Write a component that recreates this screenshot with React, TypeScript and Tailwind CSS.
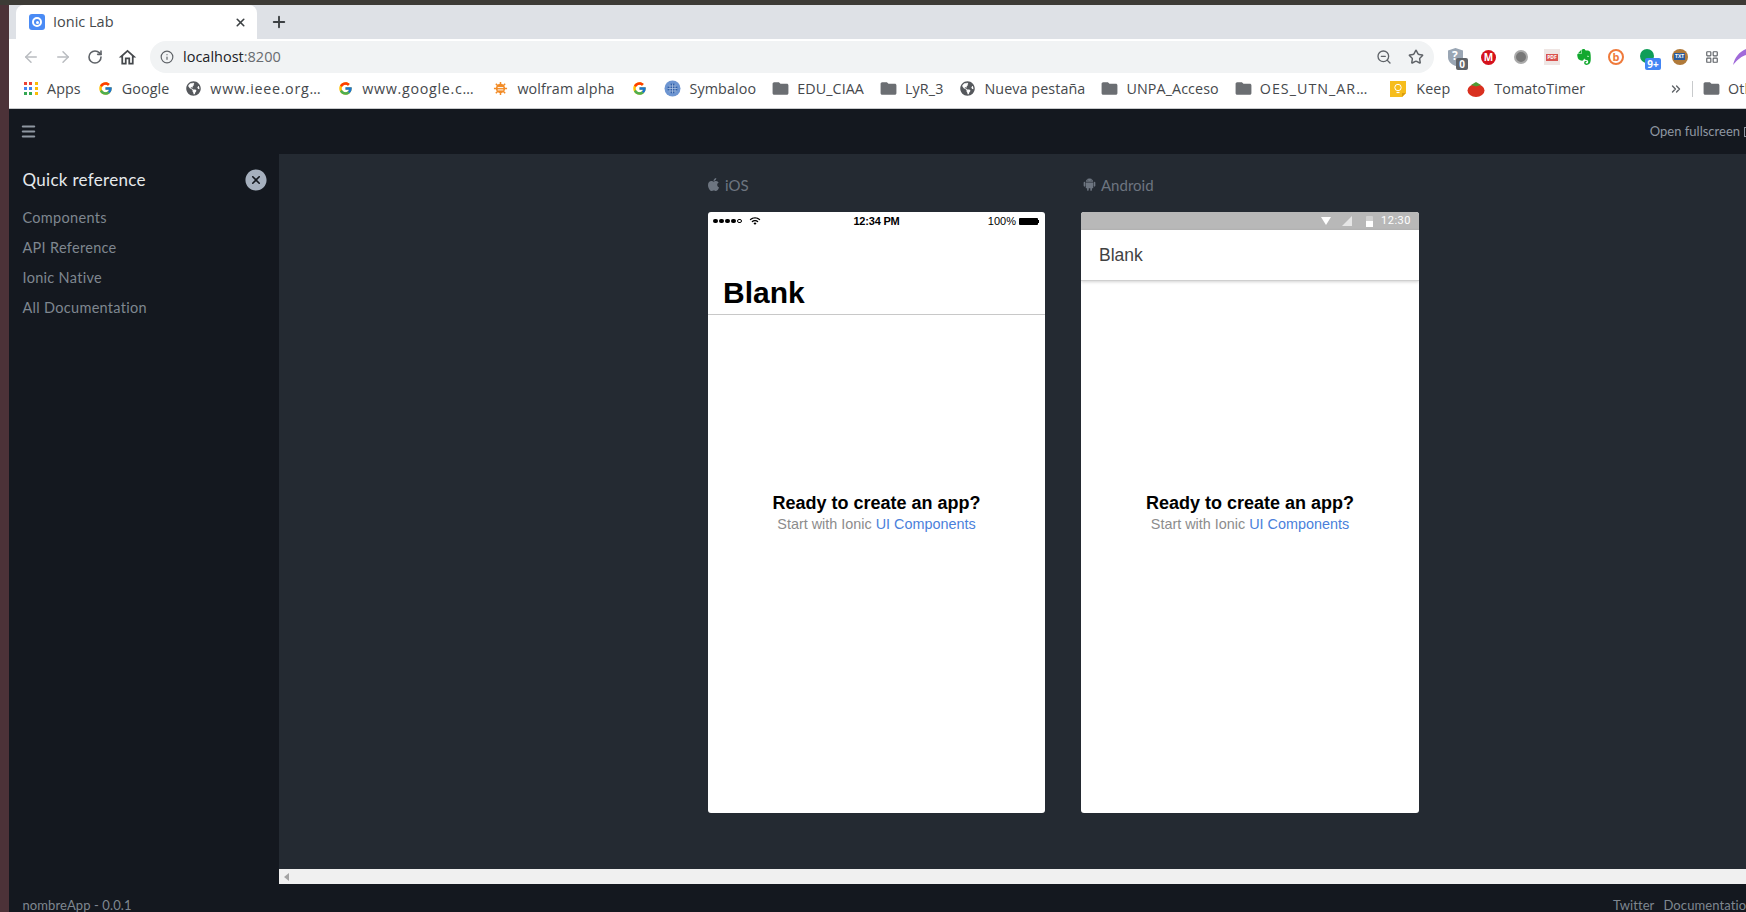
import type { ReactNode } from "react";
import { FcGoogle } from "react-icons/fc";
import { FaApple, FaGlobeAmericas } from "react-icons/fa";
import { IoIosCloseCircle, IoIosWifi, IoLogoAndroid } from "react-icons/io";
import { MdFolder, MdOutlineHome } from "react-icons/md";
import { SiEvernote } from "react-icons/si";
import { ArrowLeft, ArrowRight, ChevronsRight, Info, LayoutGrid, Menu, Plus, RotateCw, Star, X, ZoomOut } from "lucide-react";

const Folder = () => <MdFolder size={19} className="text-[#6b6e72] -mx-[2px] shrink-0" />;
const Globe = () => <FaGlobeAmericas size={15} className="text-[#55585c]" />;
const G = () => <FcGoogle size={15} />;

const AppsIcon = () => (
  <div className="grid grid-cols-3 gap-[2px] w-[14px]">
    {["bg-[#ea4335]", "bg-[#ea4335]", "bg-[#fbbc05]", "bg-[#4285f4]", "bg-[#4285f4]", "bg-[#fbbc05]", "bg-[#34a853]", "bg-[#34a853]", "bg-[#fbbc05]"].map((c, i) => (
      <span key={i} className={`h-[3px] w-[3px] ${c}`} />
    ))}
  </div>
);

const Wolfram = () => (
  <svg width="15" height="15" viewBox="0 0 16 16">
    <circle cx="8" cy="8" r="5" fill="#f28c28" />
    <path d="M8 1v14M1 8h14M3 3l10 10M13 3L3 13" stroke="#f28c28" strokeWidth="1.6" />
    <path d="M5 7h6M5 9.500h6" stroke="#fff" strokeWidth="1" />
  </svg>
);

const Symbaloo = () => (
  <svg width="17" height="17" viewBox="0 0 17 17">
    <circle cx="8.500" cy="8.500" r="8" fill="#6d95d1" />
    <circle cx="8.500" cy="8.500" r="5" fill="#2f5fa8" />
    <path d="M6 4v9M8.500 3.500v10M11 4v9M4 6h9M3.500 8.500h10M4 11h9" stroke="#b9cdea" strokeWidth="0.7" />
  </svg>
);

const KeepIcon = () => (
  <svg width="18" height="18" viewBox="0 0 18 18">
    <path d="M1 1h16v12l-4 4H1z" fill="#f6bd1c" />
    <path d="M13 17v-4h4z" fill="#d99c10" />
    <circle cx="9" cy="7.500" r="3.200" fill="none" stroke="#fff" strokeWidth="1" />
    <path d="M7.500 12.500h3" stroke="#fff" strokeWidth="1.200" />
  </svg>
);

const Tomato = () => (
  <svg width="18" height="16" viewBox="0 0 18 16">
    <ellipse cx="9" cy="9.500" rx="8.500" ry="6.500" fill="#d9301f" />
    <path d="M4 4l5-3 5 3-5 1.600z" fill="#4f9a34" />
  </svg>
);

const bookmarks: { label: string; icon: ReactNode; text?: string; box?: string }[] = [
  { label: "Apps", icon: <AppsIcon /> },
  { label: "Google", icon: <G /> },
  { label: "www.ieee.org…", icon: <Globe />, text: "tracking-[0.7px]" },
  { label: "www.google.c…", icon: <G />, text: "tracking-[0.7px]" },
  { label: "wolfram alpha", icon: <Wolfram />, box: "ml-[2px]" },
  { label: "", icon: <G /> },
  { label: "Symbaloo", icon: <Symbaloo /> },
  { label: "EDU_CIAA", icon: <Folder /> },
  { label: "LyR_3", icon: <Folder /> },
  { label: "Nueva pestaña", icon: <Globe /> },
  { label: "UNPA_Acceso", icon: <Folder /> },
  { label: "OES_UTN_AR…", icon: <Folder />, text: "tracking-[1px]" },
  { label: "Keep", icon: <KeepIcon />, box: "ml-[4px]" },
  { label: "TomatoTimer", icon: <Tomato /> },
];

function Extensions() {
  return (
    <div className="flex items-center gap-[15px] pl-[14px] shrink-0">
      {/* shield with counter */}
      <div className="relative w-[17px] h-[18px]">
        <svg width="15" height="18" viewBox="0 0 15 18">
          <path d="M7.500 0L15 2.500V9c0 4-3 7.500-7.500 9C3 16.500 0 13 0 9V2.500z" fill="#9aa6b4" />
        </svg>
        <span className="absolute left-[4px] top-0 text-[12px] leading-[15px] font-bold text-white">?</span>
        <span className="absolute -right-[3px] top-[10px] w-[12px] h-[12px] rounded-[2px] bg-[#5f6368] text-white text-[10px] leading-[12px] font-bold text-center">0</span>
      </div>
      <div className="ml-[1px] w-[15px] h-[15px] rounded-full bg-[#d5121c] text-white text-[10px] leading-[15px] font-bold text-center">M</div>
      <div className="ml-[3px] w-[14px] h-[14px] rounded-full bg-[#777] border-[2px] border-[#aaa]" />
      <div className="ml-[1px] w-[16px] h-[16px] bg-[#efe6e4] flex items-center justify-center">
        <span className="bg-[#d9534f] text-white text-[5px] leading-[7px] font-bold px-[1px]">PDF</span>
      </div>
      <SiEvernote size={16} className="ml-[1px] text-[#12a82f]" />
      <div className="ml-[1px] w-[16px] h-[16px] rounded-full border-[2px] border-[#ef7a3b] text-[#ef7a3b] text-[11px] leading-[12px] font-bold text-center">b</div>
      <div className="relative w-[16px] h-[16px] ml-[1px]">
        <div className="w-[14px] h-[14px] rounded-full bg-[#0f9d58]" />
        <span className="absolute left-[5px] top-[9px] w-[16px] h-[12px] rounded-[2px] bg-[#4285f4] text-white text-[10px] leading-[12px] font-bold text-center">9+</span>
      </div>
      <div className="relative ml-[1px] w-[16px] h-[16px] rounded-full bg-[#b07a3a]">
        <span className="absolute left-[2px] top-[4px] bg-[#2a5b9c] text-white text-[5px] leading-[7px] font-bold px-[1px]">TXT</span>
      </div>
      <LayoutGrid size={14} className="text-[#5f6368] ml-[2px]" />
      <svg width="14" height="18" viewBox="0 0 14 18" className="shrink-0 -ml-[2px]">
        <path d="M1 17C3 9 7 4 14 1v6c-4 1-8 4-13 10z" fill="#a06ad9" />
      </svg>
    </div>
  );
}

function Phone({ width, children }: { width: string; children: ReactNode }) {
  return <div className={`${width} relative h-[601px] bg-white rounded-[3px] overflow-hidden flex flex-col font-['Liberation_Sans',sans-serif]`}>{children}</div>;
}

// sits centred on the whole phone screen, over the header
function Starter() {
  return (
    <div className="absolute inset-0 pt-[2px] flex flex-col items-center justify-center">
      <div className="text-[18px] leading-[21px] font-bold text-black">Ready to create an app?</div>
      <div className="mt-[1px] text-[14.4px] leading-[19px] text-[#8c8c8c]">
        Start with Ionic <span className="text-[#4a7fdb]">UI Components</span>
      </div>
    </div>
  );
}

export default function App() {
  return (
    <div className="h-screen w-full overflow-hidden flex flex-col bg-[#45332f] font-['Open_Sans',sans-serif]">
      <div className="h-[5px] bg-[#3d3b36] shrink-0" />
      <div className="flex-1 min-h-0 flex">
        <div className="w-[9px] shrink-0 bg-[#4c3238]" />
        <div className="flex-1 min-w-0 flex flex-col">
          {/* tabs */}
          <div className="h-[34px] bg-[#dee1e6] flex items-end pl-[7px] shrink-0">
            <div className="w-[241px] h-[34px] bg-white rounded-t-[8px] flex items-center pl-[13px] pr-[10px]">
              <div className="w-[16px] h-[16px] rounded-[3px] bg-[#4a8bf5] flex items-center justify-center">
                <div className="w-[10px] h-[10px] rounded-full border-[2px] border-white bg-[#4a8bf5] flex items-center justify-center">
                  <div className="w-[3px] h-[3px] rounded-full bg-white" />
                </div>
              </div>
              <span className="ml-[8px] text-[14.5px] text-[#45484c]">Ionic Lab</span>
              <X size={13} strokeWidth={3} className="ml-auto text-[#3c4043]" />
            </div>
            <Plus size={18} strokeWidth={2.5} className="ml-[13px] mb-[8px] text-[#3c4043]" />
          </div>
          {/* toolbar */}
          <div className="h-[36px] bg-white flex items-center pl-[13px] shrink-0">
            <ArrowLeft size={18} className="text-[#b9bcc0]" />
            <ArrowRight size={18} className="ml-[14px] text-[#b9bcc0]" />
            <RotateCw size={16} strokeWidth={2.4} className="ml-[15px] text-[#5f6368]" />
            <MdOutlineHome size={21} className="ml-[14px] text-[#45484c]" />
            <div className="ml-[12px] flex-1 min-w-0 h-[32px] bg-[#f1f3f4] rounded-full flex items-center pl-[10px] pr-[10px]">
              <Info size={14} className="text-[#5f6368]" />
              <span className="ml-[9px] text-[14.5px] text-[#202124]">localhost<span className="text-[#696c70]">:8200</span></span>
              <ZoomOut size={16} className="ml-auto text-[#5f6368]" />
              <Star size={16} strokeWidth={2.2} className="ml-[16px] text-[#5f6368]" />
            </div>
            <Extensions />
          </div>
          {/* bookmarks */}
          <div className="h-[34px] pb-[6px] bg-white border-b border-[#c8cacc] flex items-center pl-[15px] shrink-0 text-[14.3px] tracking-[0.1px] text-[#45484c] whitespace-nowrap">
            <div className="flex-1 min-w-0 flex items-center gap-[17px] overflow-hidden">
              {bookmarks.map((b, i) => (
                <div key={i} className={`flex items-center gap-[9px] shrink-0 ${b.box ?? ""}`}>
                  {b.icon}
                  {b.label && <span className={b.text ?? ""}>{b.label}</span>}
                </div>
              ))}
            </div>
            <ChevronsRight size={14} strokeWidth={2.4} className="text-[#5f6368] shrink-0" />
            <div className="ml-[9px] w-px h-[16px] bg-[#c8cacc] shrink-0" />
            <div className="ml-[11px] flex items-center gap-[9px] w-[42px] shrink-0">
              <Folder />
              <span>Other bookmarks</span>
            </div>
          </div>
          {/* ionic lab */}
          <div className="flex-1 min-h-0 bg-[#14181f] flex flex-col font-['Lato',sans-serif]">
            <div className="h-[45px] shrink-0 flex items-center pl-[11px] whitespace-nowrap">
              <Menu size={17} strokeWidth={3} className="text-[#8f97a2]" />
              <span className="ml-auto text-[13px] text-[#8f97a2]">Open fullscreen</span>
              <span className="ml-[4px] w-[2px] h-[10px] border-l border-y border-[#8f97a2]" />
            </div>
            <div className="flex-1 min-h-0 flex">
              <aside className="w-[270px] shrink-0 pl-[13.5px] pr-[10px] pt-[13px]">
                <div className="flex items-center justify-between">
                  <span className="text-[17px] tracking-[0.3px] leading-[24px] text-[#e6e9ec]">Quick reference</span>
                  <IoIosCloseCircle size={26} className="text-[#a6b0be]" />
                </div>
                <nav className="mt-[10px] flex flex-col text-[14.5px] tracking-[0.3px] leading-[30px] text-[#7f8790]">
                  <span>Components</span>
                  <span>API Reference</span>
                  <span>Ionic Native</span>
                  <span>All Documentation</span>
                </nav>
              </aside>
              <main className="flex-1 min-w-0 flex flex-col bg-[#242a32]">
                <div className="flex-1 min-h-0 flex pl-[429px] gap-[36px] pt-[18px]">
                  <div className="flex flex-col">
                    <div className="h-[40px] pt-[3px] flex items-start gap-[4px] text-[15px] leading-[20px] text-[#6d7580]">
                      <FaApple size={15} className="mt-[2px] -ml-[2px]" />
                      iOS
                    </div>
                    <Phone width="w-[337px]">
                      <div className="h-[18px] flex items-center justify-between pl-[5px] pr-[6px] text-[11px] text-black relative">
                        <div className="flex items-center gap-[1.5px]">
                          {[0, 1, 2, 3].map((d) => <span key={d} className="w-[4.5px] h-[4.5px] rounded-full bg-black" />)}
                          <span className="w-[4.5px] h-[4.5px] rounded-full border-[0.5px] border-black" />
                          <IoIosWifi size={12} className="ml-[6px]" />
                        </div>
                        <span className="absolute left-1/2 -translate-x-1/2 text-[11px] font-bold tracking-[-0.2px]">12:34 PM</span>
                        <div className="flex items-center gap-[3px]">
                          100%
                          <div className="flex items-center">
                            <div className="w-[19px] h-[7px] bg-black rounded-[1px]" />
                            <div className="w-[1px] h-[3px] bg-black" />
                          </div>
                        </div>
                      </div>
                      <div className="h-[85px] border-b border-[#c8c8c8] flex items-end pl-[15px] pb-[2px]">
                        <span className="text-[30px] leading-[38px] font-bold text-black">Blank</span>
                      </div>
                      <Starter />
                    </Phone>
                  </div>
                  <div className="flex flex-col">
                    <div className="h-[40px] pt-[3px] flex items-start gap-[3px] text-[15px] leading-[20px] text-[#6d7580]">
                      <IoLogoAndroid size={17} className="mt-[1px]" />
                      Android
                    </div>
                    <Phone width="w-[338px]">
                      <div className="h-[18px] bg-[#b8b8b8] flex items-center justify-end pr-[8px] text-[11px] tracking-[0.5px] text-white font-['Roboto',sans-serif]">
                        <svg width="10" height="8" viewBox="0 0 10 8"><path d="M0 0h10L5 8z" fill="#fff" /></svg>
                        <svg width="10" height="10" viewBox="0 0 10 10" className="ml-[11px]"><path d="M10 0v10H0z" fill="#e6e6e6" /></svg>
                        <div className="ml-[14px] w-[7px] h-[11px] rounded-[1px] bg-[#d0d0d0] flex items-end">
                          <div className="w-full h-[6px] bg-white" />
                        </div>
                        <span className="ml-[8px]">12:30</span>
                      </div>
                      <div className="h-[51px] border-b border-[#cfcfcf] shadow-[0_1px_3px_rgba(0,0,0,0.18)] flex items-center pl-[18px] text-[17.5px] text-[#424242]">
                        Blank
                      </div>
                      <Starter />
                    </Phone>
                  </div>
                </div>
                <div className="h-[15px] shrink-0 bg-[#f0f0f0] flex items-center pl-[5px]">
                  <span className="w-0 h-0 border-y-[4px] border-y-transparent border-r-[5px] border-r-[#a3a3a3]" />
                </div>
              </main>
            </div>
            <footer className="h-[28px] shrink-0 flex items-start justify-between pl-[13.5px] pt-[12px] text-[13px] tracking-[0.1px] leading-[18px] text-[#7f8790] whitespace-nowrap">
              <span>nombreApp - 0.0.1</span>
              <div className="flex gap-[9px] w-[133px] shrink-0">
                <span>Twitter</span>
                <span>Documentation</span>
              </div>
            </footer>
          </div>
        </div>
      </div>
    </div>
  );
}
